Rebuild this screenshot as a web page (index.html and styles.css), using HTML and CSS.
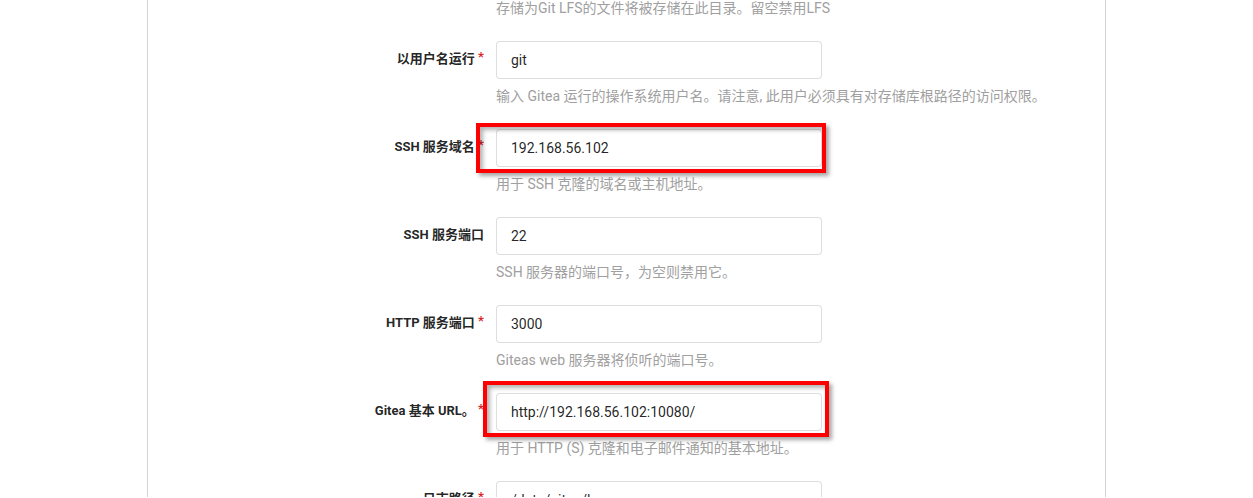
FILE: index.html
```
<!DOCTYPE html>
<html lang="zh-CN">
<head>
<meta charset="utf-8">
<title>Gitea 安装</title>
<link rel="stylesheet" href="styles.css">
</head>
<body>
<div class="segment">
  <form class="form">
    <div class="field">
      <div class="row">
        <label class="lbl">LFS 根目录</label>
        <input class="inp" type="text" value="/data/gitea/lfs">
      </div>
      <div class="help">存储为Git LFS的文件将被存储在此目录。留空禁用LFS</div>
    </div>
    <div class="field">
      <div class="row">
        <label class="lbl req">以用户名运行</label>
        <input class="inp" type="text" value="git">
      </div>
      <div class="help">输入 Gitea 运行的操作系统用户名。请注意, 此用户必须具有对存储库根路径的访问权限。</div>
    </div>
    <div class="field">
      <div class="row">
        <label class="lbl req">SSH 服务域名</label>
        <input class="inp" type="text" value="192.168.56.102">
        <span class="mark mark-ssh"></span>
      </div>
      <div class="help">用于 SSH 克隆的域名或主机地址。</div>
    </div>
    <div class="field">
      <div class="row">
        <label class="lbl">SSH 服务端口</label>
        <input class="inp" type="text" value="22">
      </div>
      <div class="help">SSH 服务器的端口号，为空则禁用它。</div>
    </div>
    <div class="field">
      <div class="row">
        <label class="lbl req">HTTP 服务端口</label>
        <input class="inp" type="text" value="3000">
      </div>
      <div class="help">Giteas web 服务器将侦听的端口号。</div>
    </div>
    <div class="field">
      <div class="row">
        <label class="lbl req">Gitea 基本 URL。</label>
        <input class="inp" type="text" value="http://192.168.56.102:10080/">
        <span class="mark mark-url"></span>
      </div>
      <div class="help">用于 HTTP (S) 克隆和电子邮件通知的基本地址。</div>
    </div>
    <div class="field">
      <div class="row">
        <label class="lbl req">日志路径</label>
        <input class="inp" type="text" value="/data/gitea/log">
      </div>
      <div class="help">日志文件将写入此目录。</div>
    </div>
  </form>
</div>
</body>
</html>
```

FILE: styles.css
```
html, body {
  margin: 0;
  padding: 0;
  background: #ffffff;
  overflow: hidden;
}

body {
  font-family: Roboto, "Noto Sans CJK SC", sans-serif;
  color: rgba(0, 0, 0, 0.87);
  font-size: 14px;
}

.segment {
  margin-left: 147px;
  width: 959px;
  box-sizing: border-box;
  border-left: 1px solid #d4d4d5;
  border-right: 1px solid #d4d4d5;
  padding: 0 16px;
  height: 497px;
  overflow: hidden;
}

.form {
  margin-top: -47px;
}

.field {
  margin-bottom: 14px;
}

.row {
  position: relative;
  display: flex;
  align-items: center;
}

.lbl {
  width: 320px;
  margin-right: 12px;
  padding-bottom: 3px;
  text-align: right;
  font-size: 13px;
  line-height: 16px;
  font-weight: 700;
  color: rgba(0, 0, 0, 0.87);
  flex: none;
}

.lbl.req::after {
  content: "*";
  color: #db2828;
  margin-left: 0.25em;
  position: relative;
  top: -2px;
}

.inp {
  width: 326px;
  height: 38px;
  box-sizing: border-box;
  margin: 0;
  padding: 0 14px;
  font-family: Roboto, "Noto Sans CJK SC", sans-serif;
  font-size: 14px;
  color: rgba(0, 0, 0, 0.87);
  background: #ffffff;
  border: 1px solid rgba(34, 36, 38, 0.15);
  border-radius: 4px;
  outline: none;
}

.help {
  margin-left: 332px;
  margin-top: 7px;
  padding-bottom: 9px;
  line-height: 20px;
  font-size: 14px;
  color: #a0a0a0;
}

.mark {
  position: absolute;
  border: 4px solid #ff0000;
  box-shadow: 3px 3px 4px rgba(0, 0, 0, 0.35), inset 3px 3px 4px rgba(0, 0, 0, 0.3);
  pointer-events: none;
}

.mark-ssh {
  left: 312px;
  top: -6px;
  width: 350px;
  height: 50px;
  box-sizing: border-box;
}

.mark-url {
  left: 319px;
  top: -12px;
  width: 346px;
  height: 56px;
  box-sizing: border-box;
}
```
